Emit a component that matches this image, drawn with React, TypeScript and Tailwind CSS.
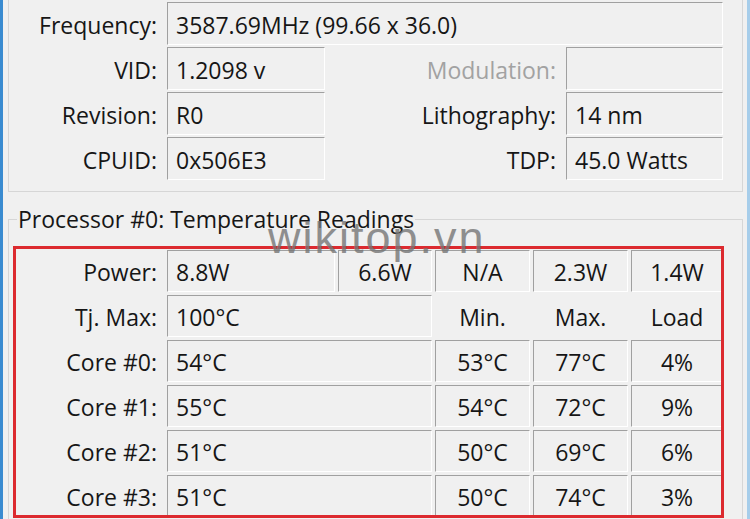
import React from 'react'

const font = { fontFamily: '"Open Sans", "Noto Sans", sans-serif' }

const field =
  'h-full shrink-0 flex items-center pt-[3px] border border-t-[#a0a0a0] border-l-[#a0a0a0] border-r-white border-b-white'

const cores = [
  { name: 'Core #0:', t: '54°C', min: '53°C', max: '77°C', load: '4%' },
  { name: 'Core #1:', t: '55°C', min: '54°C', max: '72°C', load: '9%' },
  { name: 'Core #2:', t: '51°C', min: '50°C', max: '69°C', load: '6%' },
  { name: 'Core #3:', t: '51°C', min: '50°C', max: '74°C', load: '3%' },
]

export default function App() {
  return (
    <div
      className="relative w-[750px] h-[519px] overflow-hidden bg-[#f0f0f0] border-l-[3px] border-l-[#3a8bd0] border-r-[3px] border-r-[#a6cdea] text-[23px] text-[#161616]"
      style={font}
    >
      {/* top group: processor info */}
      <div className="ml-[5px] w-[735px] border-x border-b border-[#d6d6d6] pt-[2px] pb-[11px]">
        <div className="flex flex-col gap-[2px] pr-[19px]">
          <div className="flex h-[43px] items-center">
            <span className="w-[148px] shrink-0 pt-[3px] text-right">Frequency:</span>
            <div className={`${field} ml-[10px] w-[556px] pl-[8px]`}>3587.69MHz (99.66 x 36.0)</div>
          </div>
          {[
            ['VID:', '1.2098 v', 'Modulation:', ''],
            ['Revision:', 'R0', 'Lithography:', '14 nm'],
            ['CPUID:', '0x506E3', 'TDP:', '45.0 Watts'],
          ].map(([l1, v1, l2, v2]) => (
            <div key={l1} className="flex h-[43px] items-center">
              <span className="w-[148px] shrink-0 pt-[3px] text-right">{l1}</span>
              <div className={`${field} ml-[10px] w-[158px] pl-[8px]`}>{v1}</div>
              <span className={`flex-1 pt-[3px] text-right ${l2 === 'Modulation:' ? 'text-[#a2a2a2]' : ''}`}>{l2}</span>
              <div className={`${field} ml-[10px] w-[157px] pl-[8px]`}>{v2}</div>
            </div>
          ))}
        </div>
      </div>

      {/* temperature readings */}
      <fieldset className="mt-[12px] ml-[5px] w-[735px] border border-[#d6d6d6] p-0 pb-[20px]">
        <legend className="ml-[8px] px-[1px] leading-[30px]">Processor #0: Temperature Readings</legend>
        <div className="mt-[16px] grid grid-cols-[155px_168px_94px_95px_95px_92px] auto-rows-[42px] gap-[3px]">
          <span className="self-center pt-[3px] pr-[7px] text-right">Power:</span>
          <div className={`${field} pl-[8px]`}>8.8W</div>
          <div className={`${field} justify-center`}>6.6W</div>
          <div className={`${field} justify-center`}>N/A</div>
          <div className={`${field} justify-center`}>2.3W</div>
          <div className={`${field} justify-center`}>1.4W</div>

          <span className="self-center pt-[3px] pr-[7px] text-right">Tj. Max:</span>
          <div className={`${field} col-span-2 pl-[8px]`}>100°C</div>
          <span className="self-center pt-[3px] text-center">Min.</span>
          <span className="self-center pt-[3px] text-center">Max.</span>
          <span className="self-center pt-[3px] text-center">Load</span>

          {cores.map(c => (
            <React.Fragment key={c.name}>
              <span className="self-center pt-[3px] pr-[7px] text-right">{c.name}</span>
              <div className={`${field} col-span-2 pl-[8px]`}>{c.t}</div>
              <div className={`${field} justify-center`}>{c.min}</div>
              <div className={`${field} justify-center`}>{c.max}</div>
              <div className={`${field} justify-center`}>{c.load}</div>
            </React.Fragment>
          ))}
        </div>
      </fieldset>

      {/* annotation + watermark */}
      <div className="pointer-events-none absolute left-[10px] top-[246px] w-[711px] h-[272px] border-[3px] border-[#dc2a2f]" />
      <div
        className="pointer-events-none absolute left-[265px] top-[215px] text-[45px] leading-none tracking-[2px] text-[#767676] opacity-80"
        style={{ fontFamily: '"Liberation Sans", Arial, sans-serif' }}
      >
        wikitop.vn
      </div>
    </div>
  )
}
